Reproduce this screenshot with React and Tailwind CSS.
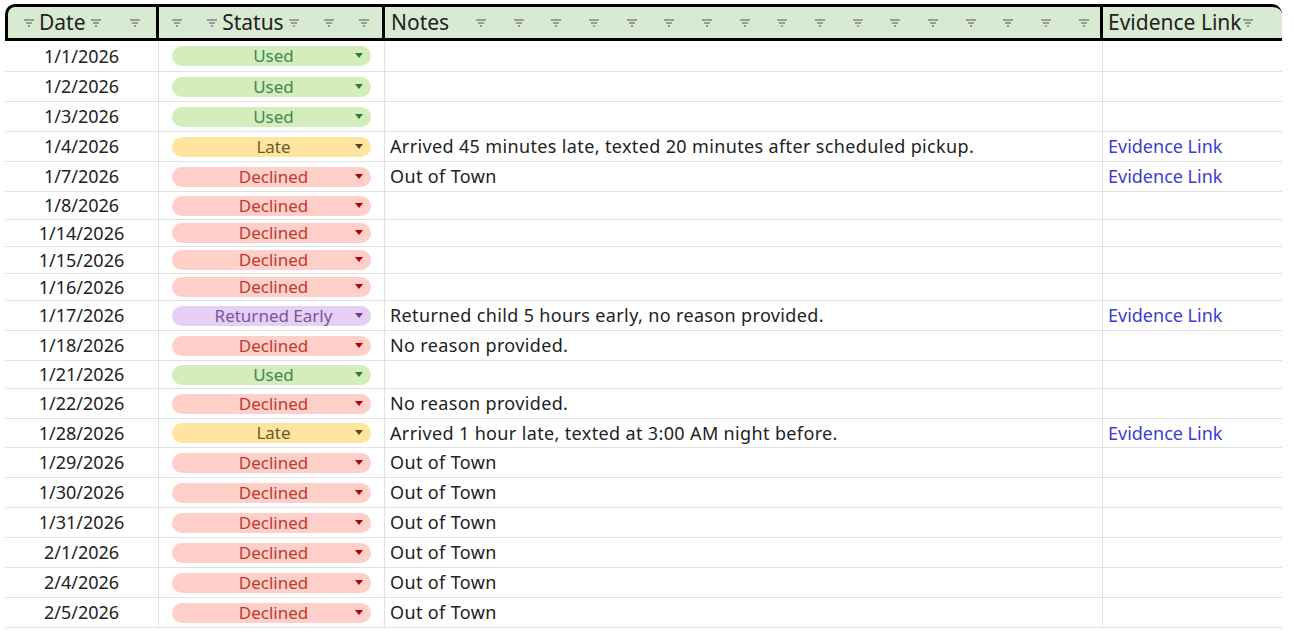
import React from "react";

const rows = [
  ["1/1/2026","U","",false,31],["1/2/2026","U","",false,30],["1/3/2026","U","",false,30],
  ["1/4/2026","L","Arrived 45 minutes late, texted 20 minutes after scheduled pickup.",true,30],
  ["1/7/2026","D","Out of Town",true,30],["1/8/2026","D","",false,28],["1/14/2026","D","",false,27],
  ["1/15/2026","D","",false,27],["1/16/2026","D","",false,27],
  ["1/17/2026","R","Returned child 5 hours early, no reason provided.",true,30],
  ["1/18/2026","D","No reason provided.",false,30],["1/21/2026","U","",false,28],
  ["1/22/2026","D","No reason provided.",false,30],
  ["1/28/2026","L","Arrived 1 hour late, texted at 3:00 AM night before.",true,29],
  ["1/29/2026","D","Out of Town",false,30],["1/30/2026","D","Out of Town",false,30],
  ["1/31/2026","D","Out of Town",false,30],["2/1/2026","D","Out of Town",false,30],
  ["2/4/2026","D","Out of Town",false,30],["2/5/2026","D","Out of Town",false,30],
];

const chips = {
  U: { label: "Used", cls: "bg-[#d4edbc] text-[#3f8a4a]", arrow: "#2f7a3a" },
  L: { label: "Late", cls: "bg-[#ffe5a0] text-[#6b5a2a]", arrow: "#5a4620" },
  D: { label: "Declined", cls: "bg-[#ffcfc9] text-[#c03a2b]", arrow: "#b10202" },
  R: { label: "Returned Early", cls: "bg-[#e6cff2] text-[#7a55a0]", arrow: "#6a3a9a" },
};

const F = () => (
  <svg width="12" height="10" viewBox="0 0 12 10" className="inline-block shrink-0">
    <path d="M1 2h10M3 5h6M5 8h2" stroke="#555" strokeWidth="1.2" />
  </svg>
);

export default function App() {
  const font = { fontFamily: '"Noto Sans", sans-serif' };
  return (
    <div className="w-[1294px] h-[638px] bg-white overflow-hidden pl-[5px] pt-[4px]" style={font}>
      <div className="w-[1277px]">
        <div className="flex h-[37px] bg-[#d9ead3] border-[3px] border-black rounded-t-[10px] border-r-0 text-[21px] text-[#222]">
          <div className="w-[151px] flex items-center justify-between px-[15px] border-r-[3px] border-black">
            <span className="flex items-center gap-1"><F />Date<F /></span><F />
          </div>
          <div className="w-[226px] flex items-center justify-between px-[12px] border-r-[3px] border-black">
            <F /><span className="flex items-center gap-1"><F />Status<F /></span><F /><F />
          </div>
          <div className="w-[718px] flex items-center justify-between pl-[6px] pr-[10px] border-r-[3px] border-black">
            <span>Notes</span>
            {Array.from({ length: 17 }).map((_, i) => <F key={i} />)}
          </div>
          <div className="flex-1 flex items-center pl-[5px] overflow-hidden whitespace-nowrap">Evidence Link<F /></div>
        </div>
        {rows.map(([d, s, n, l, h], i) => {
          const c = chips[s];
          return (
            <div key={i} className="flex border-b border-[#e2e2e2] text-[18px] text-[#222]" style={{ height: h }}>
              <div className="w-[154px] flex items-center justify-center border-r border-[#e2e2e2]">{d}</div>
              <div className="w-[226px] flex items-center px-[13px] border-r border-[#e2e2e2]">
                <div className={`w-full h-[20px] rounded-full flex items-center relative text-[17px] ${c.cls}`}>
                  <span className="flex-1 text-center pl-1">{c.label}</span>
                  <svg width="10" height="6" viewBox="0 0 10 6" className="absolute right-[7px]"><path d="M1 0h8L5 5z" fill={c.arrow} /></svg>
                </div>
              </div>
              <div className="w-[718px] flex items-center pl-[5px] border-r border-[#e2e2e2] whitespace-nowrap tracking-[0.02em]">{n}</div>
              <div className="flex-1 flex items-center pl-[5px] text-[#3c3ccf] whitespace-nowrap">{l ? "Evidence Link" : ""}</div>
            </div>
          );
        })}
      </div>
    </div>
  );
}
